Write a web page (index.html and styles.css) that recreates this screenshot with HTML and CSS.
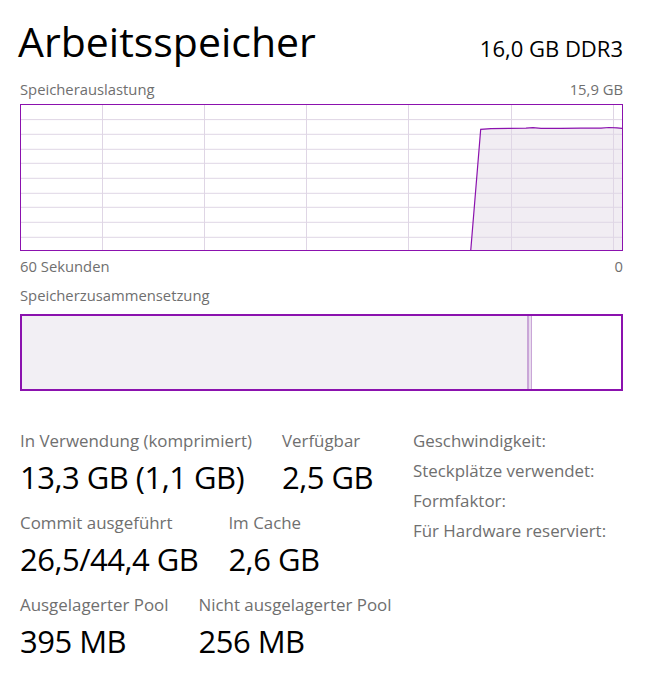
FILE: index.html
```html
<!DOCTYPE html>
<html lang="de">
<head>
<meta charset="utf-8">
<title>Arbeitsspeicher</title>
<link rel="stylesheet" href="styles.css">
</head>
<body>
<main class="page">
  <header class="header">
    <h1 class="title">Arbeitsspeicher</h1>
    <div class="spec">16,0 GB DDR3</div>
  </header>

  <div class="caption-row caption-top">
    <span>Speicherauslastung</span>
    <span>15,9 GB</span>
  </div>
  <div class="chart">
    <svg class="chart-svg" viewBox="0 0 601 145" preserveAspectRatio="none">
      <path class="area" d="M449.7 146 L459.7 24.3 L470 23.6 L488 23.4 L505 23.2 L512 22.6 L520 23.4 L540 23.3 L560 23.2 L580 23.1 L588 22.5 L596 22.8 L602 23.5 L602 146 Z"/>
      <g class="grid">
        <line x1="0" y1="14.6" x2="601" y2="14.6"/>
        <line x1="0" y1="29.3" x2="601" y2="29.3"/>
        <line x1="0" y1="44.3" x2="601" y2="44.3"/>
        <line x1="0" y1="58.3" x2="601" y2="58.3"/>
        <line x1="0" y1="73.3" x2="601" y2="73.3"/>
        <line x1="0" y1="88.3" x2="601" y2="88.3"/>
        <line x1="0" y1="102.3" x2="601" y2="102.3"/>
        <line x1="0" y1="117.3" x2="601" y2="117.3"/>
        <line x1="0" y1="132.3" x2="601" y2="132.3"/>
        <line x1="81.5" y1="0" x2="81.5" y2="145"/>
        <line x1="183.5" y1="0" x2="183.5" y2="145"/>
        <line x1="285.5" y1="0" x2="285.5" y2="145"/>
        <line x1="387.5" y1="0" x2="387.5" y2="145"/>
        <line x1="490.5" y1="0" x2="490.5" y2="145"/>
        <line x1="592.5" y1="0" x2="592.5" y2="145"/>
      </g>
      <path class="line" d="M449.7 146 L459.7 24.3 L470 23.6 L488 23.4 L505 23.2 L512 22.6 L520 23.4 L540 23.3 L560 23.2 L580 23.1 L588 22.5 L596 22.8 L602 23.5"/>
    </svg>
  </div>
  <div class="caption-row caption-bottom">
    <span>60 Sekunden</span>
    <span>0</span>
  </div>

  <div class="caption-row caption-comp">
    <span>Speicherzusammensetzung</span>
  </div>
  <div class="composition">
    <div class="seg seg-used"></div>
    <div class="seg seg-modified"></div>
    <div class="seg seg-free"></div>
  </div>

  <section class="stats">
    <div class="stats-left">
      <div class="stat-row">
        <div class="stat">
          <div class="stat-label">In Verwendung (komprimiert)</div>
          <div class="stat-value">13,3 GB (1,1 GB)</div>
        </div>
        <div class="stat">
          <div class="stat-label">Verfügbar</div>
          <div class="stat-value">2,5 GB</div>
        </div>
      </div>
      <div class="stat-row">
        <div class="stat">
          <div class="stat-label">Commit ausgeführt</div>
          <div class="stat-value">26,5/44,4 GB</div>
        </div>
        <div class="stat">
          <div class="stat-label">Im Cache</div>
          <div class="stat-value">2,6 GB</div>
        </div>
      </div>
      <div class="stat-row">
        <div class="stat">
          <div class="stat-label">Ausgelagerter Pool</div>
          <div class="stat-value">395 MB</div>
        </div>
        <div class="stat">
          <div class="stat-label">Nicht ausgelagerter Pool</div>
          <div class="stat-value">256 MB</div>
        </div>
      </div>
    </div>
    <ul class="stats-right">
      <li>Geschwindigkeit:</li>
      <li>Steckplätze verwendet:</li>
      <li>Formfaktor:</li>
      <li>Für Hardware reserviert:</li>
    </ul>
  </section>
</main>
</body>
</html>
```

FILE: styles.css
```css
* { box-sizing: border-box; }

html, body {
  margin: 0;
  padding: 0;
  background: #ffffff;
}

body {
  font-family: "Open Sans", "Noto Sans", sans-serif;
  color: #000000;
}

.page {
  width: 647px;
  padding: 16px 24px 0 20px;
}

.header {
  display: flex;
  justify-content: space-between;
  align-items: baseline;
  height: 50px;
}

.title {
  margin: 0 0 0 -2px;
  font-size: 41px;
  font-weight: 400;
  line-height: 50px;
  letter-spacing: 0;
}

.spec {
  font-size: 22px;
  line-height: 30px;
}

.caption-row {
  display: flex;
  justify-content: space-between;
  font-size: 14.8px;
  line-height: 20px;
  color: #6f6f6f;
}

.caption-top { margin-top: 13px; }
.caption-bottom { margin-top: 5px; }
.caption-comp { margin-top: 9px; }

.chart {
  margin-top: 5px;
  height: 147px;
  border: 1px solid #8b12ae;
}

.chart-svg {
  display: block;
  width: 100%;
  height: 145px;
}

.area { fill: #f1edf3; }
.grid line { stroke: #dfd6e5; stroke-width: 1; }
.line { fill: none; stroke: #8b12ae; stroke-width: 1.2; }

.composition {
  margin-top: 9px;
  height: 77px;
  border: 2px solid #8b12ae;
  display: flex;
}

.seg { height: 100%; }
.seg-used { width: 505px; background: #f2eff4; }
.seg-modified {
  width: 5px;
  background: #e9dcee;
  border-left: 2px solid #c9a6d7;
  border-right: 1px solid #c9a6d7;
}
.seg-free { flex: 1; background: #ffffff; }

.stats {
  margin-top: 40px;
  display: grid;
  grid-template-columns: 393px 1fr;
}

.stat-row {
  display: flex;
  gap: 30px;
  margin-bottom: 16px;
}

.stat-label {
  font-size: 16.9px;
  line-height: 20px;
  color: #6f6f6f;
}

.stat-value {
  margin-top: 6px;
  font-size: 31px;
  line-height: 40px;
  letter-spacing: -0.5px;
  color: #000000;
}

.stats-right {
  list-style: none;
  margin: 0;
  padding: 0;
  font-size: 16.9px;
  line-height: 30px;
  color: #6f6f6f;
  margin-top: -5px;
}
```
